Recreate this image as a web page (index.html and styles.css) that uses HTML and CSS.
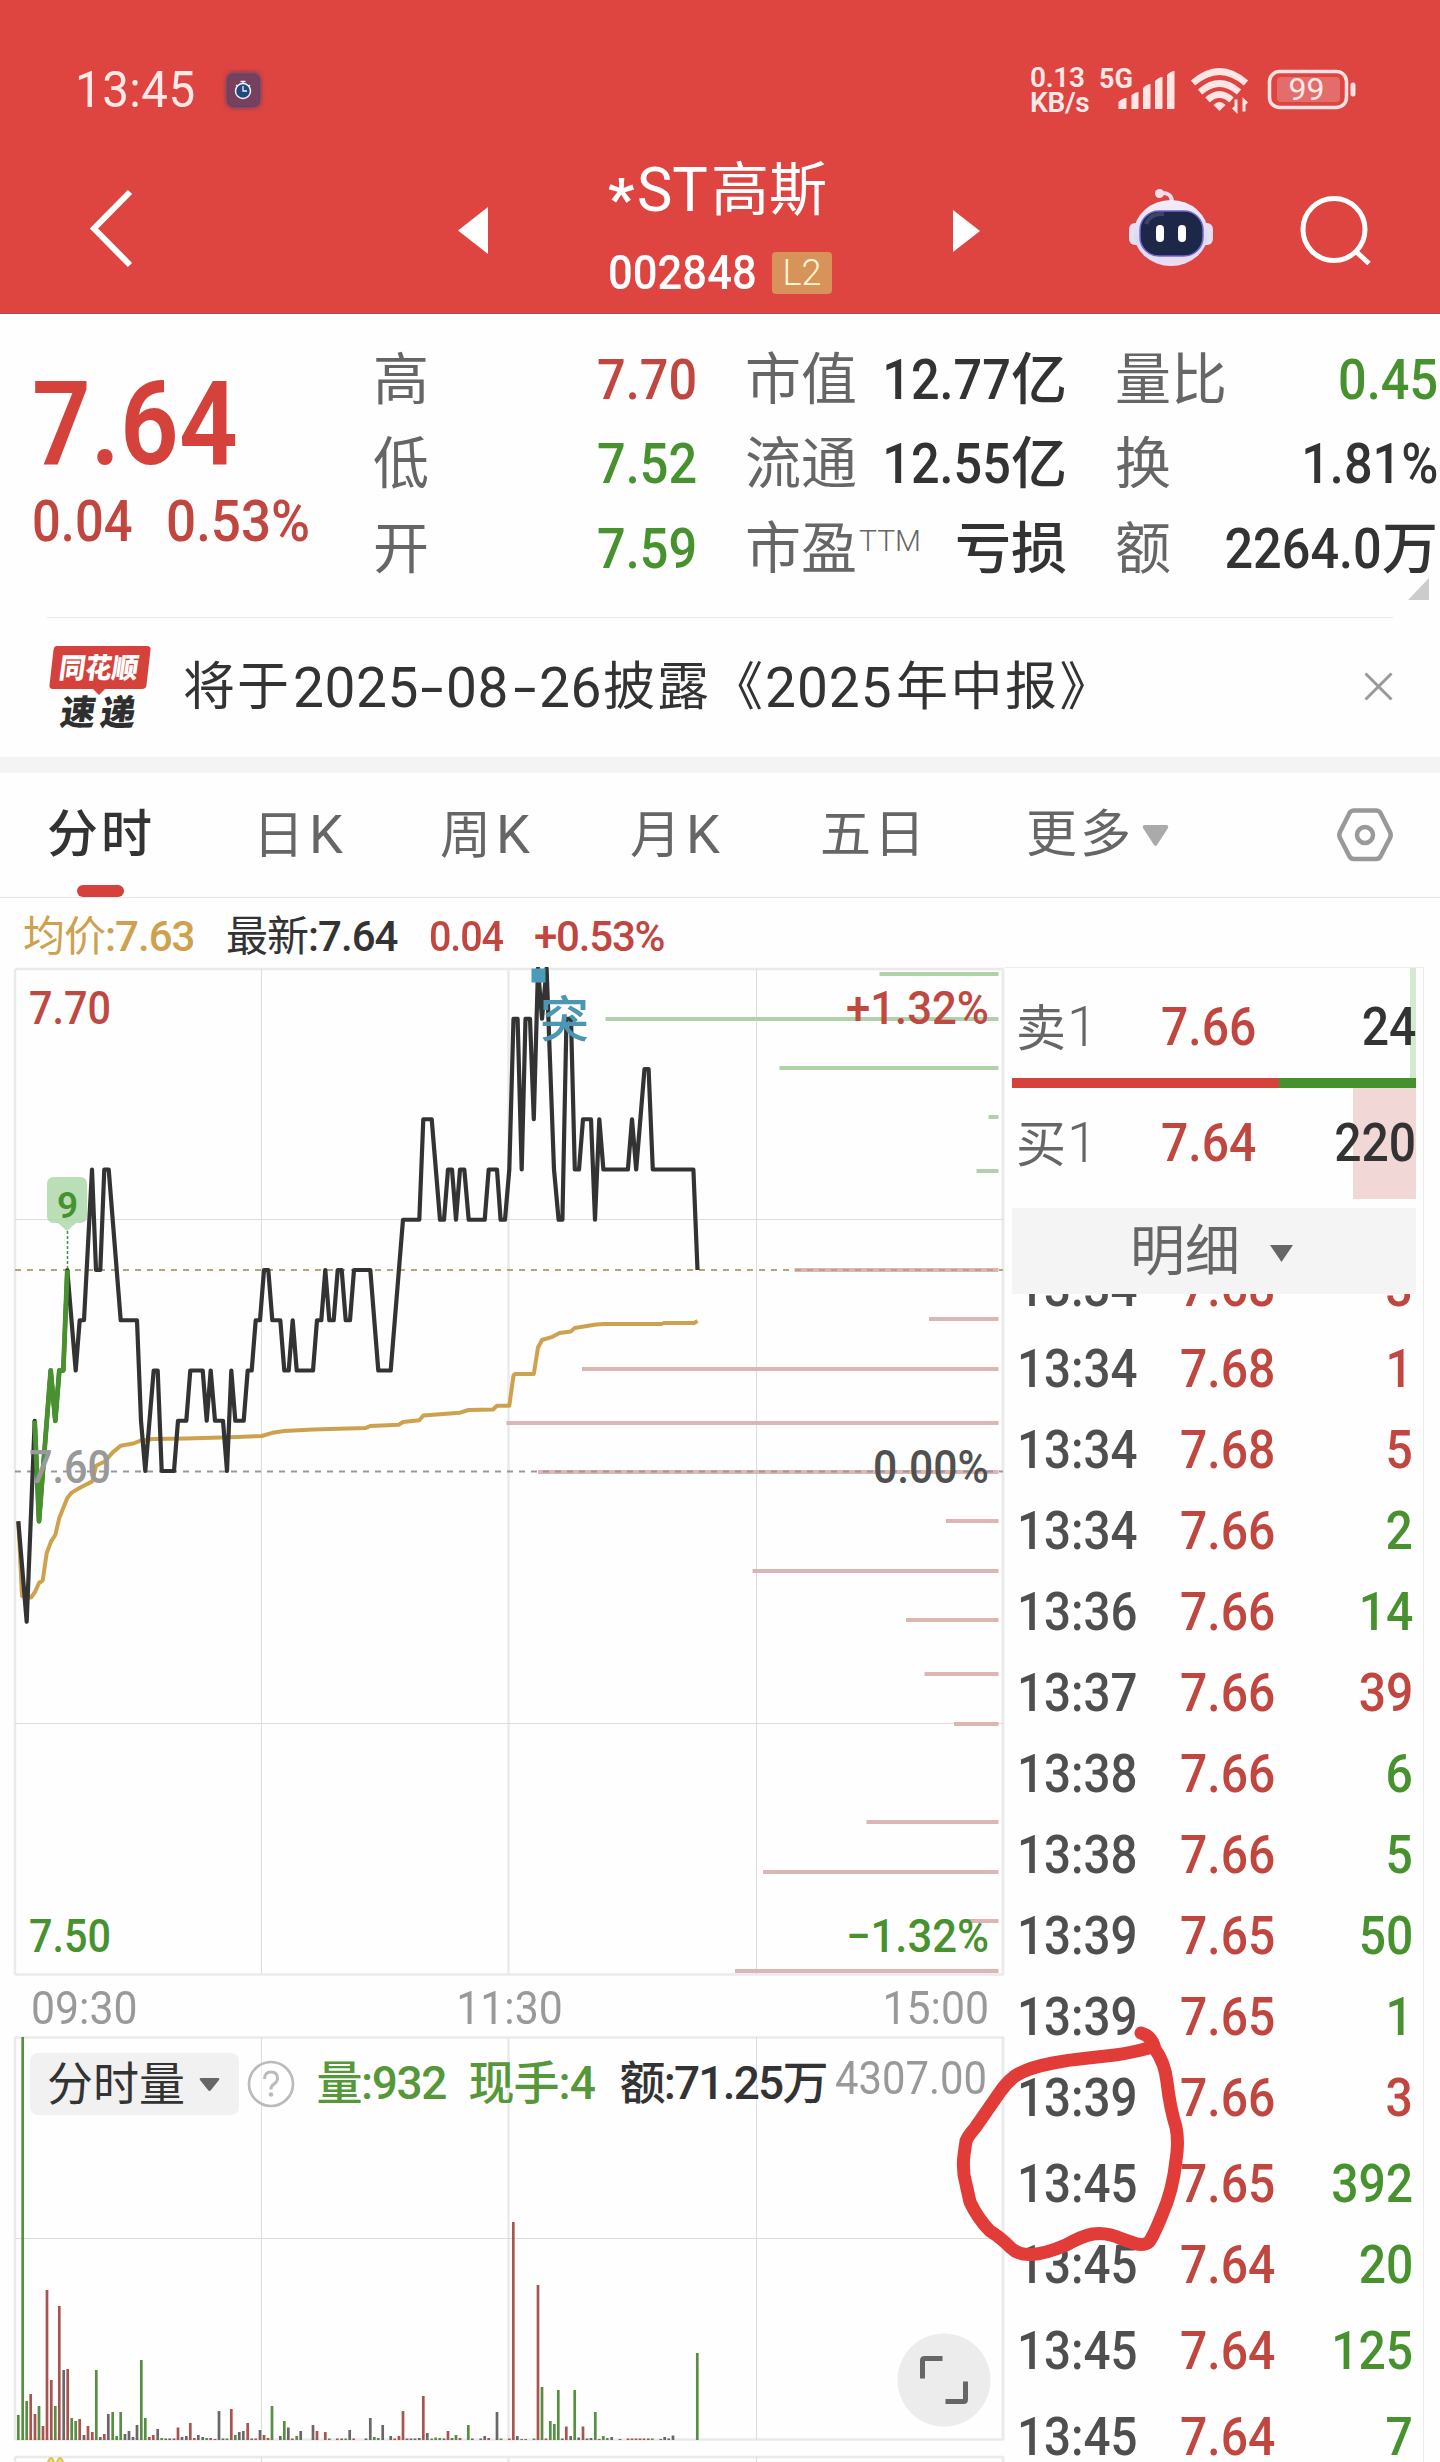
FILE: index.html
```html
<!DOCTYPE html>
<html lang="zh-CN">
<head>
<meta charset="utf-8">
<title>*ST高斯 002848</title>
<link rel="stylesheet" href="styles.css">
</head>
<body>
<div class="page">
<header class="header">
  <div class="status">
    <span class="clock">13:45</span>
    <svg class="watch" width="50" height="50" viewBox="218 65 50 50"><defs><filter id="glow"><feGaussianBlur stdDeviation="2"/></filter></defs><rect x="226" y="72" width="35" height="36" rx="7" fill="#75405f" filter="url(#glow)"/><rect x="227.500" y="74.500" width="32" height="32" rx="6" fill="#75415e" stroke="#4f4777"/><circle cx="243" cy="91" r="7.500" fill="#234a7d" stroke="#f4eef4" stroke-width="1.500"/><path d="M243 86v5h4M243 83v-2M240.500 81.500h5M236 85l1.500 1.500M250 85l-1.500 1.500" stroke="#f4eef4" stroke-width="1.300" fill="none"/></svg>
    <div class="speed"><span>0.13</span><span>KB/s</span></div>
    <svg class="sys" width="265" height="60" viewBox="1095 60 265 60">
      <g fill="#ffe6e5">
      <text x="1099" y="88" font-size="27" font-weight="700" textLength="34" lengthAdjust="spacingAndGlyphs">5G</text>
      <path d="M1118.500 109v-7q4-4 8-4v10q0 1-1 1zM1131.500 109v-14q4-3 7-3v16q0 1-1 1zM1143 109v-21q4-4 7.500-4v24q0 1-1 1zM1155 109v-28q4-4 7.500-4v31q0 1-1 1zM1167 109v-34q4-4 7.500-4v37q0 1-1 1z"/>
      <path d="M1219.500 111l-6-6q6-6 12 0z"/>
      <path d="M1232 100v11l-3-3M1240 112v-11l3 3" stroke="#ffe6e5" stroke-width="3" fill="none" transform="translate(4 -.5)"/>
      </g>
      <g fill="none" stroke="#ffe6e5" stroke-width="6.500"><path d="M1193 83q26.500-23 53 0"/><path d="M1200 92q19.500-17 39 0"/><path d="M1207.500 100q12-11 24 0"/></g>
      <rect x="1277" y="77" width="63" height="25" rx="4" fill="#e36d6a"/>
      <rect x="1269.500" y="71.500" width="77" height="36" rx="10" fill="none" stroke="#ffe2e1" stroke-width="3.500"/>
      <path d="M1353 85v9" stroke="#ffe2e1" stroke-width="5" stroke-linecap="round"/>
      <text x="1288.500" y="100" fill="#ffe9e8" font-size="31" textLength="36" lengthAdjust="spacingAndGlyphs">99</text>
    </svg>
  </div>
  <div class="nav">
    <svg width="50" height="90" viewBox="88 183 50 90"><path d="M130 192 94 228.500 130 265" fill="none" stroke="#fff" stroke-width="6"/></svg>
    <svg class="prev" width="32" height="50" viewBox="457 205 32 50"><path d="M458 230.500 488 207V254z" fill="#fff"/></svg>
    <div class="title">
      <div class="name"><span class="star">*</span><span class="st">ST</span>高斯</div>
      <div class="code"><span class="code-num">002848</span><span class="badge">L2</span></div>
    </div>
    <svg class="next" width="28" height="46" viewBox="952 208 28 46"><path d="M980 231 953 210V252z" fill="#fff"/></svg>
    <svg class="robot" width="90" height="82" viewBox="1126 187 90 82"><defs><linearGradient id="shell" x1="0" y1="0" x2="0" y2="1"><stop offset="0" stop-color="#f3eff8"/><stop offset=".6" stop-color="#d9d8fa"/><stop offset="1" stop-color="#eeddef"/></linearGradient></defs>
      <path d="M1160 193q12-1 12 9" fill="none" stroke="#ead9e8" stroke-width="4"/><circle cx="1159.500" cy="193.500" r="4.500" fill="#f3dfe8"/>
      <rect x="1129" y="223" width="15" height="22" rx="6" fill="#e7def0"/><rect x="1198" y="223" width="15" height="22" rx="6" fill="#e7def0"/>
      <ellipse cx="1171" cy="233" rx="37" ry="33" fill="url(#shell)"/><rect x="1140" y="211" width="63" height="45" rx="19" fill="#1d2748" stroke="#7565cb" stroke-width="1.500"/><path d="M1146 224q4-11 18-10" stroke="#3b456a" stroke-width="4" fill="none"/>
      <rect x="1156" y="225" width="8" height="17" rx="4" fill="#fff"/><rect x="1178" y="225" width="8" height="17" rx="4" fill="#fff"/></svg>
    <svg class="search" width="76" height="76" viewBox="1298 192 76 76"><circle cx="1334" cy="229.500" r="31" fill="none" stroke="#fff" stroke-width="5"/><path d="M1356.500 252l12.500 11.500" stroke="#fff" stroke-width="5"/></svg>
  </div>
</header>

<section class="quote">
  <div class="last"><div class="big"><span>7.64</span></div><div class="delta"><span>0.04</span><span>0.53%</span></div></div>
  <dl class="stats s1">
    <div><dt>高</dt><dd class="red"><i>7.70</i></dd></div>
    <div><dt>低</dt><dd class="green"><i>7.52</i></dd></div>
    <div><dt>开</dt><dd class="green"><i>7.59</i></dd></div>
  </dl>
  <dl class="stats s2">
    <div><dt>市值</dt><dd><i>12.77</i>亿</dd></div>
    <div><dt>流通</dt><dd><i>12.55</i>亿</dd></div>
    <div><dt>市盈<sup>TTM</sup></dt><dd>亏损</dd></div>
  </dl>
  <dl class="stats s3">
    <div><dt>量比</dt><dd class="green"><i>0.45</i></dd></div>
    <div><dt>换</dt><dd><i>1.81%</i></dd></div>
    <div><dt>额</dt><dd><i>2264.0</i>万</dd></div>
  </dl>
  <svg class="corner" width="21" height="22" viewBox="0 0 21 22"><path d="M21 0V22H0z" fill="#ccc"/></svg>
</section>

<section class="news">
  <svg width="106" height="88" viewBox="47 642 106 88"><path d="M57 645H147q4 0 3.500 4l-4 35q-.5 4-4.500 4H105l-6 6-6-6H53q-4 0-3.500-4l4-35q.5-4 3.500-4z" fill="#d5423b"/>
    <g font-weight="900"><text transform="translate(58 677) skewX(-8)" font-size="28" fill="#fff" textLength="79" lengthAdjust="spacingAndGlyphs">同花顺</text><text transform="translate(59 724) skewX(-8)" font-size="35" fill="#2f2f2f" textLength="75" lengthAdjust="spacing">速递</text></g></svg>
  <p class="headline"><span class="h1">将于</span><span class="h2">2025</span><span class="dash">-</span><span class="h2b">08</span><span class="dash">-</span><span class="h2c">26</span><span class="h3">披露《</span><span class="h4">2025</span><span class="h5">年中报》</span></p>
  <svg class="close" width="29" height="29" viewBox="0 0 29 29"><path d="M1.500 1.500l26 26M27.500 1.500l-26 26" stroke="#999" stroke-width="3"/></svg>
</section>

<nav class="tabs">
  <span class="active">分时</span><span>日<u>K</u></span><span>周<u>K</u></span><span>月<u>K</u></span><span>五日</span><span class="more">更多<svg width="27" height="23" viewBox="0 0 27 23"><path d="M3 1H24q3 0 2 3L15 21q-1.500 2-3 0L1 4q-1-3 2-3z" fill="#aaa"/></svg></span>
  <svg class="hex" width="60" height="58" viewBox="1335 806 60 58"><path d="M1354 810.500H1376q3 0 4.500 2.500L1390 832q1.500 3 0 6L1380.500 856.500Q1379 859 1376 859H1354q-3 0-4.500-2.500L1340 838q-1.500-3 0-6L1349.500 813q1.500-2.500 4.500-2.500z" fill="none" stroke="#999" stroke-width="4.500"/><circle cx="1365" cy="835" r="8" fill="none" stroke="#999" stroke-width="4.500"/></svg>
</nav>

<div class="legend"><span class="gold">均价<b>:7.63</b></span><span>最新<b>:7.64</b></span><span class="red n1">0.04</span><span class="red">+0.53%</span></div>

<main class="main">
  <div class="charts">
    <svg class="price" width="1005" height="1010" viewBox="0 967 1005 1010">
      <g stroke="#eaeaea" stroke-width="2.500" fill="none"><path d="M15 969H1004M15 969V1975M508.500 969V1975M15 1974.500H1004"/><path d="M1003 969V1975" stroke-width="3"/></g>
      <path d="M261.500 969V1974M756.500 969V1974M15 1219.500H1003M15 1723.500H1003" stroke="#dcdcdc" stroke-width="1" fill="none"/>
      <g stroke-width="4" fill="none"><path d="M879.500 974H998.500M605.500 1019H998.500M779.500 1068H998.500M988.500 1117H998.500M976.500 1171H998.500" stroke="#b1d1ab"/><path d="M794.500 1270H998.500M929 1319H998.500M582 1369H998.500M506.500 1423H998.500M538 1472H998.500M946 1521H998.500M752.500 1571H998.500M906 1620H998.500M924.500 1674H998.500M954 1724H998.500M866.500 1822H998.500M763 1872H998.500M965 1921H998.500M735 1971H998.500" stroke="#dbb6b4"/></g>
      <path d="M15 1270H1003" stroke="#b7a582" stroke-width="1.800" stroke-dasharray="6 6"/><path d="M15 1471.500H1003" stroke="#999" stroke-width="1.800" stroke-dasharray="6 6"/>
      <g fill="none" stroke-linejoin="round"><path id="avg" stroke="#cda14d" stroke-width="4"/><path id="line" stroke="#333" stroke-width="4.200"/><path id="rise" stroke="#47912f" stroke-width="4.800"/></g>
      <path d="M67.500 1231V1270" stroke="#47912f" stroke-width="1.500" stroke-dasharray="3 2"/>
      <path d="M54 1177H80q7 0 7 7V1216q0 7-7 7H76l-9 8-9-8H54q-7 0-7-7V1184q0-7 7-7z" fill="#a9d6a4" fill-opacity=".8"/>
      <rect x="531.500" y="968.500" width="14" height="14" fill="#4b9cbb"/>
      <g font-size="46" font-weight="500">
      <text x="57" y="1218" font-size="37" font-weight="600" fill="#47912f">9</text>
      <text x="540" y="1037" font-size="49" fill="#4b97b3">突</text>
      <text x="29" y="1024" fill="#bf4841" textLength="82" lengthAdjust="spacingAndGlyphs">7.70</text>
      <text x="29" y="1483" fill="#999" textLength="82" lengthAdjust="spacingAndGlyphs">7.60</text>
      <text x="29" y="1952" fill="#47912f" textLength="82" lengthAdjust="spacingAndGlyphs">7.50</text>
      <text x="846" y="1024" fill="#bf4841" textLength="143" lengthAdjust="spacingAndGlyphs">+1.32%</text>
      <text x="873" y="1483" fill="#505050" textLength="116" lengthAdjust="spacingAndGlyphs">0.00%</text>
      <text x="846" y="1952" fill="#47912f" textLength="143" lengthAdjust="spacingAndGlyphs">−1.32%</text></g>
    </svg>
    <div class="axis"><span>09:30</span><span>11:30</span><span>15:00</span></div>
    <div class="volume">
      <svg class="bars" width="1005" height="426" viewBox="0 2036 1005 426">
        <g stroke="#eaeaea" stroke-width="2.500" fill="none"><path d="M15 2037.500H1004M15 2037V2440M508.500 2037V2440M15 2439.500H1004M15 2457H1004M15 2457V2462M508.500 2457V2462"/><path d="M1003 2037V2440M1003 2457V2462" stroke-width="3"/></g>
        <path d="M261.500 2037V2440M756.500 2037V2440M15 2238.500H1003M261.500 2457V2462M756.500 2457V2462" stroke="#dcdcdc" fill="none"/>
        <g fill="none" stroke-width="2.700"><path id="bk" stroke="#6b6768"/><path id="bg" stroke="#588e43"/><path id="br" stroke="#a9544e"/></g>
        <path d="M48 2462q3-8 6 0M57 2462q3-8 6 0" stroke="#e0c15c" stroke-width="2" fill="#ecd98c"/>
      </svg>
      <div class="vol-head">
        <span class="pick">分时量<svg width="21" height="15" viewBox="0 0 21 15"><path d="M2 1H19q2 0 1 2L12 13q-1.500 2-3 0L1 3Q0 1 2 1z" fill="#666"/></svg></span>
        <svg class="help" width="48" height="48" viewBox="0 0 48 48"><circle cx="24" cy="24" r="22" fill="#fff" fill-opacity=".5" stroke="#bbb" stroke-width="2.700"/><path d="M17.500 19q0-7 6.500-7t6.500 6.500q0 3-3.500 5.500t-3 5.500" fill="none" stroke="#bbb" stroke-width="3"/><circle cx="24" cy="34.500" r="2.300" fill="#bbb"/></svg>
        <span class="v1">量:932</span><span class="v2">现手:4</span><span class="v3">额:71.25万</span><span class="v4">4307.00</span>
      </div>
      <svg class="expand" width="94" height="94" viewBox="896.500 2332.500 94 94"><circle cx="943.500" cy="2379.500" r="46.500" fill="#ececec"/><path d="M922 2378V2360q0-2 2-2H942M965 2381V2399q0 2-2 2H945" fill="none" stroke="#666" stroke-width="5"/></svg>
    </div>
  </div>
  <aside class="book">
    <div class="level ask"><span>卖<u>1</u></span><b>7.66</b><em>24</em></div>
    <div class="ratio"></div>
    <div class="level bid"><span>买<u>1</u></span><b>7.64</b><em>220</em></div>
    <div class="detail">明细<svg width="23" height="17" viewBox="0 0 23 17"><path d="M0 0H23L11.500 17z" fill="#666"/></svg></div>
    <div class="ticks">
      <div class="t"><span>13:34</span><b>7.68</b><em class="red">3</em></div>
      <div class="t"><span>13:34</span><b>7.68</b><em class="red">1</em></div>
      <div class="t"><span>13:34</span><b>7.68</b><em class="red">5</em></div>
      <div class="t"><span>13:34</span><b>7.66</b><em>2</em></div>
      <div class="t"><span>13:36</span><b>7.66</b><em>14</em></div>
      <div class="t"><span>13:37</span><b>7.66</b><em class="red">39</em></div>
      <div class="t"><span>13:38</span><b>7.66</b><em>6</em></div>
      <div class="t"><span>13:38</span><b>7.66</b><em>5</em></div>
      <div class="t"><span>13:39</span><b>7.65</b><em>50</em></div>
      <div class="t"><span>13:39</span><b>7.65</b><em>1</em></div>
      <div class="t"><span>13:39</span><b>7.66</b><em class="red">3</em></div>
      <div class="t gap"><span>13:45</span><b>7.65</b><em>392</em></div>
      <div class="t"><span>13:45</span><b>7.64</b><em>20</em></div>
      <div class="t gap"><span>13:45</span><b>7.64</b><em>125</em></div>
      <div class="t gap"><span>13:45</span><b>7.64</b><em>7</em></div>
    </div>
  </aside>
</main>
<svg class="mark" width="240" height="250" viewBox="950 2020 240 250"><path d="M1141 2033Q1152 2036 1155 2049Q1165 2063 1167 2082Q1170 2108 1176 2127Q1179 2142 1176 2160Q1173 2190 1162 2215Q1153 2237 1149 2242Q1144 2246 1135 2243.500L1122 2239Q1107 2232 1093 2234Q1082 2236 1066 2245Q1045 2254 1031 2254.500Q1018 2255 1011 2248Q1000 2237 990 2231Q978 2219 970 2202L966 2184Q962 2170 964 2155L966 2141Q968 2136 975 2128L1000 2092Q1006 2083 1015 2076Q1027 2068 1053 2063Q1068 2060 1084 2058.500L1115 2055Q1130 2053 1149 2048" fill="none" stroke="#e13c38" stroke-width="13" stroke-linecap="round" stroke-linejoin="round"/></svg>
</div>
<script src="chart.js"></script>
</body>
</html>
```
FILE: styles.css
```css
* { box-sizing: border-box; margin: 0; padding: 0; }
body { font-family: Roboto, "Noto Sans CJK SC", sans-serif; background: #fefefe; color: #333; width: 1440px; }
svg { display: block; flex: none; }
i, em, b { font-style: normal; font-weight: 500; }
u { text-decoration: none; }
.page { position: relative; height: 2462px; overflow: hidden; }
.red { color: #c1463f; }
.green { color: #47912f; }
.gold { color: #cda14d; }

.header { height: 314px; background: #de4440; color: #fff; border-bottom: 1px solid #a9504e; }
.status { height: 150px; display: flex; padding: 60px 0 0 75px; color: #ffe9e8; }
.clock { width: 143px; font-size: 50px; line-height: 60px; transform: scaleX(.95); transform-origin: left; letter-spacing: .5px; }
.watch { margin-top: 5px; }
.speed { width: 65px; margin: 6px 0 0 762px; font-size: 28px; line-height: 24.500px; font-weight: 600; display: flex; flex-direction: column; align-items: flex-start; }
.speed span { letter-spacing: -.3px; }
.nav { display: flex; align-items: flex-start; padding-left: 88px; }
.nav > svg { margin-top: 33px; }
.nav .prev { margin: 55px 0 0 319px; }
.title { width: 224px; margin-left: 120px; }
.name { display: flex; height: 74px; line-height: 80px; font-size: 58px; white-space: nowrap; }
.star { width: 29px; padding-top: 9px; font-weight: 700; margin-left: -1px; }
.st { width: 74px; font-size: 62px; transform: scaleX(.96); transform-origin: left; }
.code { display: flex; align-items: center; margin-top: 26px; height: 46px; }
.code-num { width: 163px; font-size: 49px; line-height: 48px; font-weight: 500; transform: scaleX(.89); transform-origin: left; margin-left: -1px; }
.badge { width: 60px; height: 42px; margin-left: 1px; border-radius: 4px; background: #d8935a; color: #fff6d2; font-size: 36px; line-height: 43px; text-align: center; font-weight: 300; }
.nav .next { margin: 58px 0 0 119px; }
.nav .robot { margin: 37px 0 0 146px; }
.nav .search { margin: 42px 0 0 82px; }

.quote { position: relative; display: flex; height: 303px; }
.last { width: 373px; padding: 52px 0 0 32px; color: #d5423b; }
.big { font-size: 117px; line-height: 117px; font-weight: 600; }
.big span { display: inline-block; transform: scaleX(.88); transform-origin: left; }
.delta { display: flex; margin-top: 10px; font-size: 57px; line-height: 57px; color: #c1463f; font-weight: 500; }
.delta span { width: 134px; transform: scaleX(.89); transform-origin: left; }
.delta span + span { transform: scaleX(.93); }
.stats { padding-top: 24px; font-size: 56px; line-height: 84px; white-space: nowrap; }
.stats div { display: flex; justify-content: space-between; height: 84.300px; }
.stats dt { color: #666; }
.stats dd { font-weight: 500; }
.stats i { display: inline-block; transform: scaleX(.9); transform-origin: right; }
.s1 { width: 324px; }
.s2 { width: 322px; margin-left: 48px; }
.s3 { width: 323px; margin-left: 48px; }
.stats sup { font-size: 30px; line-height: 0; vertical-align: 17px; font-weight: 300; margin-left: 2px; }
.corner { position: absolute; left: 1408px; top: 264px; }

.news { display: flex; height: 156px; padding: 26px 0 0 47px; border-bottom: 16px solid #f4f4f4; background: linear-gradient(#e8e8e8, #e8e8e8) 47px 0 / 1346px 1px no-repeat; }
.headline { display: flex; margin-left: 30px; width: 1181px; font-size: 52px; line-height: 90px; white-space: nowrap; }
.headline span { display: block; letter-spacing: 2px; }
.headline .h1 { width: 110px; }
.headline .h2, .headline .h2b, .headline .h2c, .headline .h4, .headline .dash { font-size: 55px; letter-spacing: .6px; }
.headline .h2 { width: 125px; }
.headline .dash { width: 28px; text-align: center; letter-spacing: 0; transform: scaleX(1.5); }
.headline .h2b { width: 65px; }
.headline .h2c { width: 64px; }
.headline .h3 { width: 162px; }
.headline .h4 { width: 131px; letter-spacing: 1px; }
.headline .h5 { letter-spacing: 2.500px; }
.close { margin-top: 29px; }

.tabs { display: flex; height: 125px; border-bottom: 1px solid #e6e6e6; padding-left: 47px; font-size: 51px; line-height: 124px; color: #666; letter-spacing: 3px; white-space: nowrap; }
.tabs > span { width: 190px; }
.tabs u { font-size: 54px; margin-left: 2px; }
.tabs > .active { width: 206px; color: #333; font-weight: 500; position: relative; }
.active::after { content: ""; position: absolute; left: 30px; top: 112px; width: 47px; height: 12px; border-radius: 6px; background: #d5423b; }
.tabs > span:nth-child(2) { width: 187px; }
.tabs > span:nth-child(5) { width: 206px; }
.tabs > .more { width: 309px; display: flex; align-items: center; }
.more svg { margin-left: 8px; }
.hex { margin-top: 33px; }

.legend { display: grid; grid-template-columns: 203px 203px 105px auto; height: 69px; padding-left: 23px; font-size: 42px; line-height: 77px; font-weight: 500; letter-spacing: -1.200px; white-space: nowrap; }
.legend span:nth-child(-n+2) { font-weight: 400; letter-spacing: -1px; }
.legend .n1 { transform: scaleX(.94); transform-origin: left; }

.main { display: flex; height: 1495px; }
.charts { width: 1005px; }
svg text { font-family: Roboto, "Noto Sans CJK SC", sans-serif; }
.axis { display: flex; justify-content: space-between; height: 59px; padding: 0 16px 0 31px; color: #999; font-size: 47px; line-height: 61px; font-weight: 400; }
.axis span { transform: scaleX(.91); transform-origin: left; }
.axis span:nth-child(2) { transform-origin: center; }
.axis span:last-child { transform-origin: right; }
.volume { position: relative; height: 426px; }
.vol-head { position: absolute; left: 30px; top: 17px; display: flex; align-items: flex-start; height: 62px; font-size: 46px; line-height: 61px; white-space: nowrap; font-weight: 500; }
.pick { width: 209px; height: 62px; display: flex; align-items: center; border-radius: 8px; background: #f1f1f1; padding-left: 17px; font-weight: 400; }
.pick svg { margin-left: 14px; }
.help { margin: 7px 0 0 7.500px; }
.vol-head .v1 { width: 152px; margin-left: 22px; color: #56973a; letter-spacing: -1.400px; }
.vol-head .v2 { width: 151px; color: #56973a; letter-spacing: -1px; }
.vol-head .v3 { width: 215px; letter-spacing: -1.800px; }
.vol-head .v4 { color: #999; font-weight: 400; font-size: 47px; line-height: 49px; transform: scaleX(.89); transform-origin: left; }
.expand { position: absolute; left: 896.500px; top: 296.500px; }

.book { width: 419px; border: 1px solid #ececec; border-width: 1px 1px 0 0; padding: 0 7px 0 7px; }
.level, .t { display: grid; grid-template-columns: 145px 1fr auto; padding-left: 4px; font-size: 54px; white-space: nowrap; }
.level { height: 110px; line-height: 118px; }
.level span { color: #666; font-size: 50px; }
.level u { font-size: 55px; font-weight: 300; margin-left: 1px; }
.level b, .t b { color: #c1463f; transform: scaleX(.89); transform-origin: left; }
.level em { transform: scaleX(.89); transform-origin: right; }
.ask { background: linear-gradient(#d4e9d2, #d4e9d2) right / 6px 100% no-repeat; }
.ratio { height: 10px; background: linear-gradient(90deg, #d5423b 267px, #45922c 267px); }
.bid { height: 111px; line-height: 110px; background: linear-gradient(#f1d7d6, #f1d7d6) right / 63px 100% no-repeat; }
.detail { margin-top: 9px; height: 86px; background: #f4f4f4; display: flex; align-items: center; justify-content: center; gap: 30px; font-size: 55px; line-height: 84px; color: #666; padding-right: 5px; }
.detail svg { margin-top: 4px; }
.ticks { height: 1168px; overflow: hidden; }
.t { height: 81px; line-height: 81px; grid-template-columns: 163px 1fr auto; padding: 0 3px 0 5px; }
.t:first-child { margin-top: -47px; }
.t.gap { margin-top: 5px; }
.t span { color: #4f4f4f; font-weight: 500; transform: scaleX(.88); transform-origin: left; }
.t em { color: #47912f; transform: scaleX(.89); transform-origin: right; }
.t em.red { color: #c1463f; }
.mark { position: absolute; left: 950px; top: 2020px; }
```
FILE: chart.js
```javascript
// Price series as [x, cents above 7.00]
const price = [[18.3,59],[26.7,57],[34.7,61],[39,59],[50.7,62],[55.3,61],[59.3,62],[63.3,62],[67.3,64],[75.7,62],[79.7,63],[84,63],[92,66],[96,64],[100.3,64],[104.3,66],[108.7,66],[120.7,63],[137,63],[141,61],[145.3,60],[153.7,62],[157.7,62],[161.7,60],[174,60],[178,61],[186.3,61],[190.3,62],[202.7,62],[206.7,61],[210.7,62],[215,61],[223,61],[227,60],[231.3,62],[235.3,61],[243.7,61],[247.7,62],[251.7,62],[255.7,63],[260,63],[264,64],[268.3,64],[272.3,63],[280.3,63],[284.3,62],[288.7,62],[292.7,63],[296.7,62],[313,62],[317,63],[321.3,63],[325.3,64],[329.3,63],[333.7,63],[337.7,64],[341.7,64],[345.7,63],[350,63],[354,64],[370.3,64],[378.3,62],[390.7,62],[403,65],[419.3,65],[423.3,67],[431.7,67],[440,65],[444,65],[448,66],[452,66],[456,65],[460,66],[464.3,66],[468.7,65],[484.7,65],[488.7,66],[497,66],[500.6,65],[505,65],[509.3,66],[513.5,69],[517.6,69],[521.7,66],[525.5,69],[530,69],[533.8,67],[538,70],[542,69],[546.6,70],[554,66],[558.6,65],[562.4,65],[566.5,69],[571,69],[574.8,66],[579,66],[583,67],[591,67],[595,65],[599.3,67],[603.4,66],[627.9,66],[632,67],[636.2,66],[644.5,68],[648.6,68],[652.8,66],[693.4,66],[697.5,64]];
const toPath = pts => "M" + pts.map(p => p[0] + " " + p[1]).join("L");
const pricePts = price.map(([x, c]) => [x, 1471 - (c - 60) * 50.25]);
document.getElementById("line").setAttribute("d", toPath(pricePts));
document.getElementById("rise").setAttribute("d", toPath(pricePts.slice(2, 9)));

const avg = [[18.3,1521],[22,1596],[31,1597.500],[35,1592],[39,1583],[42.7,1580.500],[46.7,1553],[51,1541.700],[55.3,1535],[59.3,1518],[67.3,1498],[71.7,1492.600],[80,1487.700],[92.3,1481.400],[96,1465.800],[104.3,1461.800],[112.7,1452.400],[120.7,1445.700],[133.3,1443.500],[141.3,1440.400],[153,1439],[186,1438.600],[230,1437.200],[261.7,1436],[272.3,1432.800],[284.3,1431],[313,1429.600],[366,1427.900],[370.3,1426],[399,1424.700],[403,1422],[419.3,1420.300],[423.3,1415.400],[460,1412.700],[468.7,1410],[493,1409.500],[496.9,1405.700],[509.3,1405.700],[513.5,1375.500],[515,1374],[533.8,1374],[538,1347.500],[542,1340],[552.4,1336.800],[559.5,1333],[571,1331.400],[574.8,1327.900],[596,1324.600],[604,1324],[661.5,1324],[664,1323],[694,1323],[697.5,1321]];
document.getElementById("avg").setAttribute("d", toPath(avg));

// Volume by colour: x, height, x, height, ...
const volume = {
  bg: [18.3,25,22.7,403,26.7,39,39,34,55.3,34,71.7,22,75.7,19,96.3,70,112.7,28,116.7,4,120.7,28,141.3,80,145.3,22,161.7,2,206.7,2,227,1.5,235.3,5,272,34,284.3,19,296.7,4,329.3,1.5,345.7,1.5,374.3,3,378.3,2,431.7,1.5,435.7,2.5,439.7,2,456,5,468.3,15,501,1.5,521.7,1,534,1.5,542,53,550.3,19,554.3,16,558.3,50,574.7,50,595.3,28,603.3,4,607.3,2,652.3,1.5,697.3,87],
  br: [30.7,46,35,26,43,14,47,150,51.3,60,59.3,134,67.7,71,79.7,21,88,14,92.3,8,104.3,6,149.3,3,153.3,5,178,12.500,190.3,17,194.3,2,210.7,2,231.3,31,247.7,17,255.7,1.5,264,5,268,2,292.3,1.5,317,9,325.3,8,337.3,1.5,353.7,1.5,394.7,1.5,399,4,403,29,423.3,44,448,9,460,2,488.7,2,509.3,1.5,513.3,218,525.7,1,538,155,546,1.5,566.3,13.500,583,13.500,599.3,1,628,1.5,632,1.5,636,1.5,640,1.5,644,1.5],
  bk: [63.7,70,84,5,100.3,3,108.3,26,125,6,129,9,133,3,137,15,157.7,11,165.7,1.5,169.7,1.5,174,1.5,182,3,186.3,4,198.3,5,202.7,3,215,1,219,29,223,1.5,239.3,8,243.3,9,251.7,1.5,260,10,280.3,4,288.3,12.500,300.7,9,313,15,341.7,1.5,349.7,10,366,1.5,370.3,22,382.7,15,390.7,4,407,1.5,411,1.5,415,1.5,419.3,2,427.3,7,444,1.5,452,2,472.3,1.5,480.7,1.5,484.7,4,497,28,517.3,4,562.3,1.5,570.7,4,578.7,2.5,587,1.5,591,2,611.7,3,620,1,648.3,1.5,660.7,1,664.7,3,668.7,1.5,673,4.5]
};
for (const id in volume) {
  const v = volume[id];
  let d = "";
  for (let k = 0; k < v.length; k += 2) d += `M${v[k]} 2440v${-v[k + 1]}`;
  document.getElementById(id).setAttribute("d", d);
}
```
